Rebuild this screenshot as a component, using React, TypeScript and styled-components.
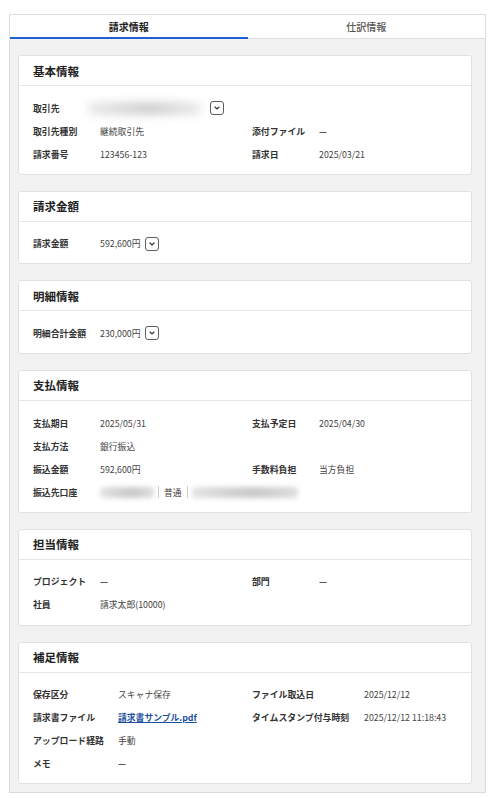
import React from "react";
import styled, { createGlobalStyle } from "styled-components";

const Global = createGlobalStyle`
  html, body { margin: 0; padding: 0; background: #ffffff; }
  body {
    font-family: "Noto Sans CJK JP", "Noto Sans", sans-serif;
    color: #333333;
    -webkit-font-smoothing: antialiased;
  }
  * { box-sizing: border-box; }
`;

const Frame = styled.div`
  width: 477px;
  margin: 14px 0 0 9px;
  border: 1px solid #dcdcdc;
  background: #f2f2f2;
`;

const TabBar = styled.div`
  display: flex;
  height: 24px;
  background: #ffffff;
  border-bottom: 1px solid #dedede;
`;

const Tab = styled.div<{ $active?: boolean }>`
  flex: 1;
  position: relative;
  display: flex;
  align-items: center;
  justify-content: center;
  font-size: 10px;
  font-weight: ${(p) => (p.$active ? 700 : 500)};
  color: ${(p) => (p.$active ? "#222222" : "#555555")};
  &::after {
    content: "";
    display: ${(p) => (p.$active ? "block" : "none")};
    position: absolute;
    left: 0;
    right: 0;
    bottom: -1px;
    height: 2px;
    background: #1f5fd6;
  }
`;

const Panel = styled.div`
  display: flex;
  flex-direction: column;
  gap: 16px;
  padding: 16px 13px 8px 8px;
`;

const Card = styled.section`
  background: #ffffff;
  border: 1px solid #e1e1e1;
  border-radius: 3px;
`;

const CardHeader = styled.h2`
  margin: 0;
  height: 30px;
  display: flex;
  align-items: center;
  padding: 0 14px;
  border-bottom: 1px solid #e6e6e6;
  font-size: 11.5px;
  font-weight: 700;
  color: #222222;
`;

const CardBody = styled.div`
  display: grid;
  grid-template-columns: 1fr 1fr;
  column-gap: 14px;
  grid-auto-rows: 23.1px;
  padding: 10.5px 14px 8px;
`;

const Field = styled.div`
  display: flex;
  align-items: center;
  min-width: 0;
`;

const Label = styled.div<{ $w: number }>`
  flex: none;
  width: ${(p) => p.$w}px;
  font-size: 8.9px;
  font-weight: 700;
  color: #333333;
  white-space: nowrap;
`;

const Value = styled.div`
  display: flex;
  align-items: center;
  gap: 4px;
  font-size: 8.8px;
  color: #444444;
  white-space: nowrap;
`;

const Blur = styled.span<{ $w: number; $r?: number }>`
  display: inline-block;
  width: ${(p) => p.$w}px;
  height: 11px;
  border-radius: 4px;
  background: linear-gradient(90deg, #e4e4e4, #d2d2d2 35%, #c9c9c9 60%, #dedede);
  filter: blur(${(p) => p.$r ?? 2.5}px);
`;

const WideBlur = styled(Blur)`
  margin-left: -12px;
  margin-right: 4px;
  height: 13px;
  background: linear-gradient(90deg, #ececec, #dadada 30%, #cfcfcf 55%, #e2e2e2 85%, #eeeeee);
`;

const Sep = styled.span`
  display: inline-block;
  width: 1px;
  height: 12px;
  background: #cfcfcf;
`;

const Plain = styled.span`
  margin: 0 1px;
`;

const DropButton = styled.button`
  width: 14px;
  height: 14px;
  padding: 0;
  border: 1px solid #5e5e5e;
  border-radius: 3px;
  background: #ffffff;
  display: inline-flex;
  align-items: center;
  justify-content: center;
  color: #333333;
`;

const FileLink = styled.a`
  color: #1b4f9e;
  font-weight: 700;
  text-decoration: underline;
`;

const Dash = styled.span`
  font-weight: 700;
  color: #444444;
`;

const Drop = () => (
  <DropButton type="button" aria-label="展開">
    <svg width="8" height="8" viewBox="0 0 8 8">
      <path d="M2 3 L4 5 L6 3" fill="none" stroke="#333" strokeWidth="1.1" strokeLinecap="round" strokeLinejoin="round" />
    </svg>
  </DropButton>
);

type F = { label: string; value: React.ReactNode };
type Sec = { title: string; rows: [F, F?][]; lw?: [number, number] };

const dash = <Dash>—</Dash>;

const sections: Sec[] = [
  {
    title: "基本情報",
    rows: [
      [
        {
          label: "取引先",
          value: (
            <>
              <WideBlur $w={114} $r={4} />
              <Drop />
            </>
          ),
        },
      ],
      [
        { label: "取引先種別", value: "継続取引先" },
        { label: "添付ファイル", value: dash },
      ],
      [
        { label: "請求番号", value: "123456-123" },
        { label: "請求日", value: "2025/03/21" },
      ],
    ],
  },
  {
    title: "請求金額",
    rows: [
      [
        {
          label: "請求金額",
          value: (
            <>
              592,600円 <Drop />
            </>
          ),
        },
      ],
    ],
  },
  {
    title: "明細情報",
    rows: [
      [
        {
          label: "明細合計金額",
          value: (
            <>
              230,000円 <Drop />
            </>
          ),
        },
      ],
    ],
  },
  {
    title: "支払情報",
    rows: [
      [
        { label: "支払期日", value: "2025/05/31" },
        { label: "支払予定日", value: "2025/04/30" },
      ],
      [{ label: "支払方法", value: "銀行振込" }],
      [
        { label: "振込金額", value: "592,600円" },
        { label: "手数料負担", value: "当方負担" },
      ],
      [
        {
          label: "振込先口座",
          value: (
            <>
              <Blur $w={54} />
              <Sep />
              <Plain>普通</Plain>
              <Sep />
              <Blur $w={106} />
            </>
          ),
        },
      ],
    ],
  },
  {
    title: "担当情報",
    rows: [
      [
        { label: "プロジェクト", value: dash },
        { label: "部門", value: dash },
      ],
      [{ label: "社員", value: "請求太郎(10000)" }],
    ],
  },
  {
    title: "補足情報",
    lw: [85, 112],
    rows: [
      [
        { label: "保存区分", value: "スキャナ保存" },
        { label: "ファイル取込日", value: "2025/12/12" },
      ],
      [
        { label: "請求書ファイル", value: <FileLink href="#">請求書サンプル.pdf</FileLink> },
        { label: "タイムスタンプ付与時刻", value: "2025/12/12 11:18:43" },
      ],
      [{ label: "アップロード経路", value: "手動" }],
      [{ label: "メモ", value: dash }],
    ],
  },
];

export default function App() {
  return (
    <>
      <Global />
      <Frame>
        <TabBar>
          <Tab $active>請求情報</Tab>
          <Tab>仕訳情報</Tab>
        </TabBar>
        <Panel>
          {sections.map((s) => {
            const lw = s.lw ?? [67, 67];
            return (
              <Card key={s.title}>
                <CardHeader>{s.title}</CardHeader>
                <CardBody>
                  {s.rows.map(([l, r], i) => (
                    <React.Fragment key={i}>
                      <Field>
                        <Label $w={lw[0]}>{l.label}</Label>
                        <Value>{l.value}</Value>
                      </Field>
                      {r ? (
                        <Field>
                          <Label $w={lw[1]}>{r.label}</Label>
                          <Value>{r.value}</Value>
                        </Field>
                      ) : (
                        <Field />
                      )}
                    </React.Fragment>
                  ))}
                </CardBody>
              </Card>
            );
          })}
        </Panel>
      </Frame>
    </>
  );
}
